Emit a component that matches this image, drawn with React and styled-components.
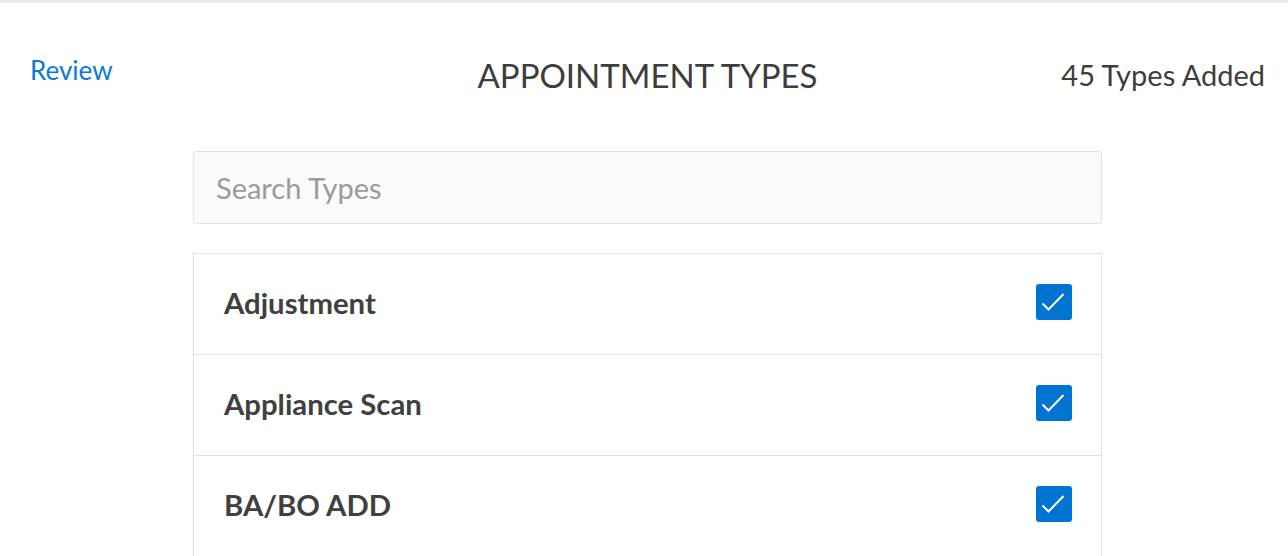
import styled, { createGlobalStyle } from "styled-components";

const GlobalStyle = createGlobalStyle`
  * { box-sizing: border-box; }
  body {
    margin: 0;
    background: #fff;
    font-family: Lato, "Open Sans", sans-serif;
    color: #444;
  }
`;

const Page = styled.div`
  border-top: 3px solid #ededed;
  height: 556px;
  overflow: hidden;
`;

const Header = styled.div`
  display: grid;
  grid-template-columns: 1fr auto 1fr;
  align-items: start;
  height: 97px;
  padding: 54px 23px 0 30px;
  line-height: 1;
`;

const BackLink = styled.a`
  font-size: 26px;
  color: #0a7bd4;
  justify-self: start;
  cursor: pointer;
`;

const Title = styled.h1`
  margin: 2px 0 0;
  font-size: 33px;
  line-height: 1;
  font-weight: 400;
  color: #3d3d3d;
`;

const Count = styled.div`
  margin-top: 3px;
  font-size: 29px;
  color: #3d3d3d;
  justify-self: end;
`;

const Content = styled.div`
  width: 909px;
  margin: 51px 0 0 193px;
`;

const Search = styled.input`
  display: block;
  width: 100%;
  height: 73px;
  padding: 0 22px;
  background: #fafafa;
  border: 1px solid #e2e2e2;
  border-radius: 3px;
  font-family: Lato, sans-serif;
  font-size: 29px;
  color: #444;
  outline: none;
  &::placeholder {
    color: #9b9b9b;
  }
`;

const List = styled.ul`
  list-style: none;
  margin: 29px 0 0;
  padding: 0;
  border: 1px solid #e2e2e2;
  border-bottom: none;
`;

const Row = styled.li`
  display: flex;
  align-items: center;
  justify-content: space-between;
  height: 101px;
  padding: 0 29px 0 30px;
  border-bottom: 1px solid #e2e2e2;
`;

const Name = styled.span`
  margin-bottom: 3px;
  font-size: 29.3px;
  font-weight: 700;
  color: #404040;
`;

const Check = styled.span`
  width: 36px;
  height: 36px;
  margin-bottom: 5px;
  border-radius: 3px;
  background: ${(p) => (p.checked ? "#0074d1" : "#fff")};
  border: ${(p) => (p.checked ? "none" : "1px solid #ccc")};
  display: block;
`;

const types = ["Adjustment", "Appliance Scan", "BA/BO ADD"];

export default function App() {
  return (
    <Page>
      <GlobalStyle />
      <Header>
        <BackLink>Review</BackLink>
        <Title>APPOINTMENT TYPES</Title>
        <Count>45 Types Added</Count>
      </Header>
      <Content>
        <Search placeholder="Search Types" />
        <List>
          {types.map((t) => (
            <Row key={t}>
              <Name>{t}</Name>
              <Check checked>
                <svg width="36" height="36" viewBox="0 0 36 36">
                  <path d="M6.5 19.5 L12.5 25.5 L27.5 10" fill="none" stroke="#fff" strokeWidth="2" />
                </svg>
              </Check>
            </Row>
          ))}
        </List>
      </Content>
    </Page>
  );
}
